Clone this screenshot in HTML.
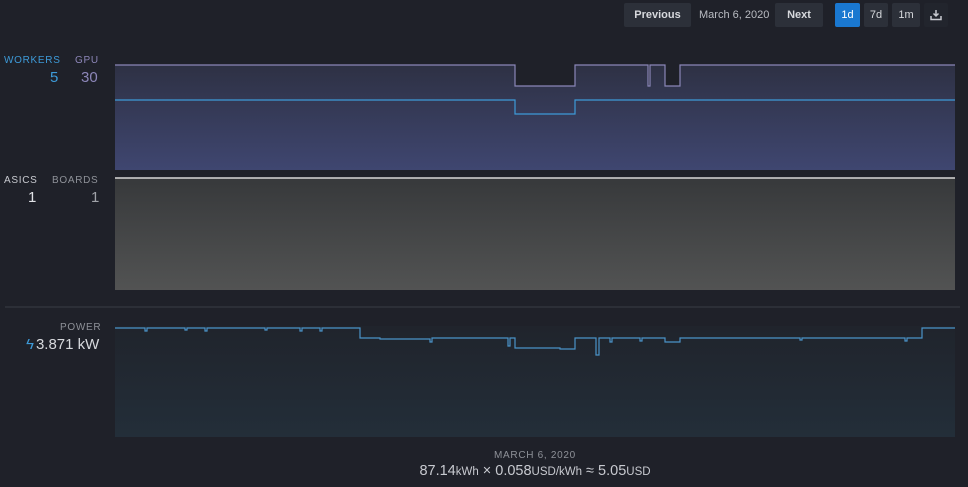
<!DOCTYPE html>
<html><head><meta charset="utf-8"><style>
body{margin:0;width:968px;height:487px;background:#1f2129;font-family:"Liberation Sans",sans-serif;overflow:hidden;position:relative}
.a{position:absolute}
.btn{position:absolute;top:3px;height:24px;line-height:24px;background:#2c3039;color:#d7d9dd;font-size:11px;text-align:center;border-radius:2px}
.lbl{font-size:10px;letter-spacing:0.7px}
</style></head><body>
<div class="btn" style="left:624px;width:67px;font-weight:bold">Previous</div>
<div class="a" style="left:699px;top:9px;font-size:11px;color:#b9bcc2">March 6, 2020</div>
<div class="btn" style="left:775px;width:48px;font-weight:bold">Next</div>
<div class="btn" style="left:835px;width:25px;background:#1a78d0;color:#fff">1d</div>
<div class="btn" style="left:864px;width:24px">7d</div>
<div class="btn" style="left:892px;width:28px">1m</div>
<div class="btn" style="left:924px;width:24px;background:#22252d">
<svg width="12" height="12" viewBox="0 0 12 12" style="margin-top:6px"><path d="M6 1v6M3.5 4.5L6 7l2.5-2.5M1 7v3.5h10V7" stroke="#c8cad0" stroke-width="1.5" fill="none"/></svg></div>

<div class="a lbl" style="left:4px;top:55px;color:#3d9ad8">WORKERS</div>
<div class="a lbl" style="left:75px;top:55px;color:#8c86b8">GPU</div>
<div class="a" style="left:50px;top:69px;font-size:15px;color:#3d9ad8">5</div>
<div class="a" style="left:81px;top:69px;font-size:15px;color:#8c86b8">30</div>
<div class="a lbl" style="left:4px;top:175px;color:#c8cad0">ASICS</div>
<div class="a lbl" style="left:52px;top:175px;color:#8e9198">BOARDS</div>
<div class="a" style="left:28px;top:189px;font-size:15px;color:#e0e2e6">1</div>
<div class="a" style="left:91px;top:189px;font-size:15px;color:#a0a3a9">1</div>
<div class="a lbl" style="left:60px;top:322px;color:#8e9198">POWER</div>
<div class="a" style="left:26px;top:336px;font-size:15px;color:#d7d9dd"><span style="color:#3d9ad8;margin-right:2px">ϟ</span>3.871 kW</div>

<svg class="a" style="left:0;top:0" width="968" height="487">
<defs>
<linearGradient id="g1" x1="0" y1="0" x2="0" y2="1"><stop offset="0" stop-color="#2e3144"/><stop offset="1" stop-color="#3f4670"/></linearGradient>
<linearGradient id="g2" x1="0" y1="0" x2="0" y2="1"><stop offset="0" stop-color="#37393b"/><stop offset="1" stop-color="#525353"/></linearGradient>
<linearGradient id="g3" x1="0" y1="0" x2="0" y2="1"><stop offset="0" stop-color="#20242c"/><stop offset="1" stop-color="#232e39"/></linearGradient>
</defs>
<path d="M115 65H515V86H575V65H648V86H650V65H665V86H680V65H955V170H115Z" fill="url(#g1)"/>
<path d="M115 65H515V86H575V65H648V86H650V65H665V86H680V65H955" stroke="#8a86b8" stroke-width="1.2" fill="none"/>
<path d="M115 100H515V114H575V100H955" stroke="#3d9ad8" stroke-width="1.2" fill="none"/>
<rect x="115" y="178" width="840" height="112" fill="url(#g2)"/>
<line x1="115" y1="178" x2="955" y2="178" stroke="#d8d8d8" stroke-width="1.5"/>
<line x1="5" y1="307" x2="960" y2="307" stroke="#3a3d45" stroke-width="1"/>
<rect x="115" y="326" width="840" height="111" fill="url(#g3)"/>
<path d="M115 328H145V331H147V328H185V330H187V328H205V331H207V328H265V330H267V328H300V331H302V328H320V331H322V328H360V338H380V339H430V342H432V338H508V346H510V338H515V348H560V349H575V338H596V355H599V338H610V342H612V338H640V341H642V338H665V342H680V338H800V340H802V338H905V341H907V338H922V328H955" stroke="#4a93c8" stroke-width="1.2" fill="none"/>
</svg>

<div class="a lbl" style="left:0;width:1070px;top:450px;text-align:center;color:#8e9198">MARCH 6, 2020</div>
<div class="a" style="left:0;width:1070px;top:463px;text-align:center;color:#c8cad0;font-size:14.5px">87.14<span style="font-size:11.5px">kWh</span> × 0.058<span style="font-size:11.5px">USD/kWh</span> ≈ 5.05<span style="font-size:11.5px">USD</span></div>
</body></html>
